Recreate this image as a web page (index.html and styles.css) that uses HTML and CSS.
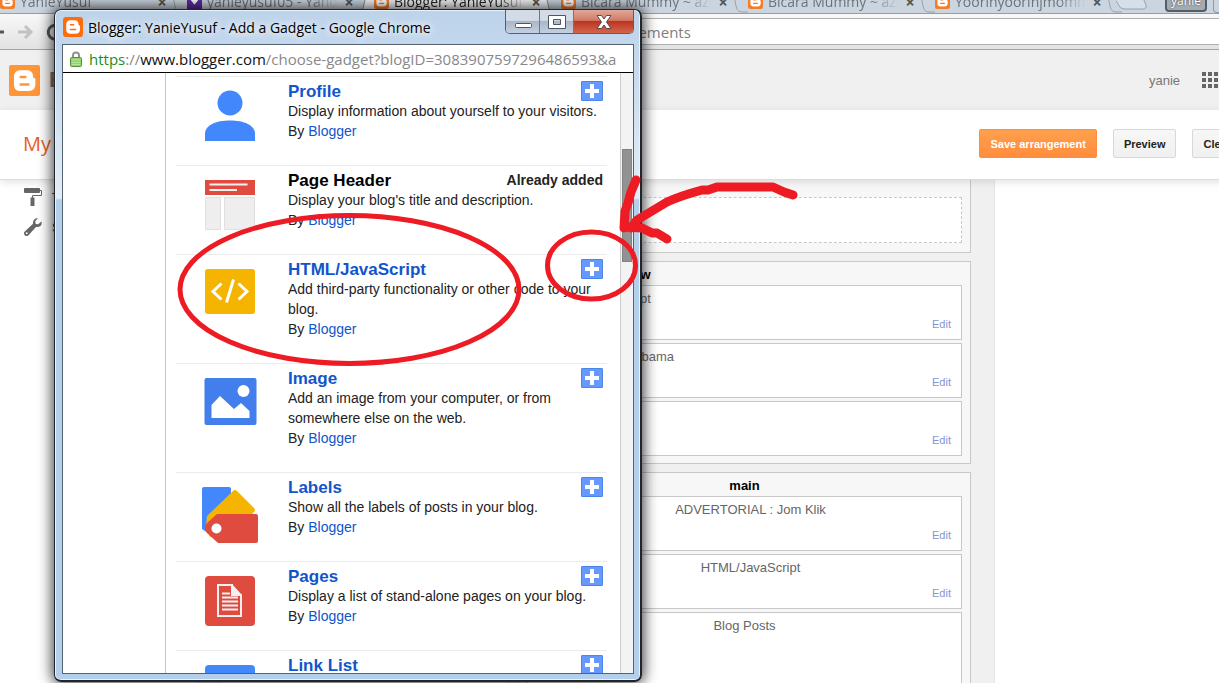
FILE: index.html
```html
<!DOCTYPE html>
<html lang="en">
<head>
<meta charset="utf-8">
<title>Blogger: YanieYusuf - Add a Gadget</title>
<link rel="stylesheet" href="styles.css">
</head>
<body>
<svg class="defs" aria-hidden="true">
  <symbol id="b-logo" viewBox="0 0 30 30">
    <path fill="#fff" fill-rule="evenodd" d="M11 5h6.500c3.500 0 5.800 2.500 5.800 5.400v1.300c.2.900.7 1 1.400 1.100.6.100.8.500.8 1.100v4.800c0 4-2.500 6.500-6.300 6.500H11c-3.700 0-6.200-2.500-6.200-6.200v-7.800C4.800 7.500 7.300 5 11 5zm.3 5.400a1.200 1.200 0 0 0 0 2.400h4.500a1.200 1.200 0 0 0 0-2.400zm0 7.200a1.200 1.200 0 0 0 0 2.400h7.500a1.200 1.200 0 0 0 0-2.400z"/>
  </symbol>
  <symbol id="favicon" viewBox="0 0 30 30">
    <rect width="30" height="30" rx="5" fill="#f57d28"/>
    <use href="#b-logo"/>
  </symbol>
  <symbol id="slant" viewBox="0 0 20 22">
    <path d="M5 0l3 15q1 6 6 6h6" fill="none" stroke="#98a3b0"/>
  </symbol>
</svg>

<div class="browser">
  <nav class="tabs" aria-label="Open tabs">
    <div class="tab"><svg class="fav"><use href="#favicon"/></svg><span class="tab-name">YanieYusuf</span><button class="tab-x" aria-label="Close">×</button><svg class="slant"><use href="#slant"/></svg></div>
    <div class="tab"><svg class="fav" viewBox="0 0 14 14"><rect width="14" height="14" fill="#5c2da0"/><path d="M3 5l4 5 4-5z" fill="#fff"/></svg><span class="tab-name">yanieyusuf05 - Yahoo</span><button class="tab-x" aria-label="Close">×</button><svg class="slant" viewBox="0 0 20 22"><path d="M20 0h-7l-3 13q-1 8-6 9h16z" fill="#f1f3f5"/><path d="M13 0l-3 13q-1 8-6 9" fill="none" stroke="#7f8a96"/></svg></div>
    <div class="tab active"><svg class="fav"><use href="#favicon"/></svg><span class="tab-name">Blogger: YanieYusuf - Layout</span><button class="tab-x" aria-label="Close">×</button><svg class="slant" viewBox="0 0 20 22"><path d="M4 0l3 13q1 8 6 9h7V0z" fill="#cbd5df"/><path d="M4 0l3 13q1 8 6 9" fill="none" stroke="#7f8a96"/></svg></div>
    <div class="tab"><svg class="fav"><use href="#favicon"/></svg><span class="tab-name">Bicara Mummy ~ azie</span><button class="tab-x" aria-label="Close">×</button><svg class="slant"><use href="#slant"/></svg></div>
    <div class="tab"><svg class="fav"><use href="#favicon"/></svg><span class="tab-name">Bicara Mummy ~ azie</span><button class="tab-x" aria-label="Close">×</button><svg class="slant"><use href="#slant"/></svg></div>
    <div class="tab"><svg class="fav"><use href="#favicon"/></svg><span class="tab-name">Yoorinyoorinjmommy</span><button class="tab-x" aria-label="Close">×</button><svg class="slant"><use href="#slant"/></svg></div>
    <svg class="new-tab" viewBox="0 0 32 22"><path d="M-6 0h30l6 14q1 4-3 4H8q-4 0-6-5z" fill="#d5dfe9" stroke="#98a3b0"/></svg>
    <button class="user-chip">yanie</button>
    <span class="win-chip"></span>
  </nav>

  <div class="toolbar">
    <svg class="nav-icons" viewBox="0 0 72 24">
      <path d="M0 12h4" stroke="#555" stroke-width="3"/>
      <path d="M18 12h12M25 6l6 6-6 6" fill="none" stroke="#c2c2c2" stroke-width="3"/>
      <path d="M60 7a7 7 0 1 0 2 7" fill="none" stroke="#555" stroke-width="3"/>
    </svg>
    <input class="omnibox" aria-label="Address" value="https://www.blogger.com/blogger.g?blogID=3083907597296486593#pageelements">
  </div>

  <header class="site-head">
    <svg class="site-logo" viewBox="0 0 30 30"><rect width="30" height="30" rx="2" fill="#ff9537"/><use href="#b-logo"/></svg>
    <span class="site-name">Blogger</span>
    <span class="account">yanie</span>
    <svg class="apps" viewBox="0 0 18 18" fill="#666"><path d="M1 1h4v4H1zM7 1h4v4H7zM13 1h4v4h-4zM1 7h4v4H1zM7 7h4v4H7zM13 7h4v4h-4zM1 13h4v4H1zM7 13h4v4H7zM13 13h4v4h-4z"/></svg>
  </header>

  <div class="actions">
    <h1 class="blog-title">My blog</h1>
    <button class="btn primary">Save arrangement</button>
    <button class="btn">Preview</button>
    <button class="btn">Clear</button>
  </div>

  <main class="work">
    <nav class="side">
      <a class="side-link" href="#"><svg class="side-icon" viewBox="0 0 18 18"><path d="M0 1q0-1 1-1h14q1 0 1 1v3q0 1-1 1H1q-1 0-1-1z" fill="#666"/><path d="M16 2.500h1.500v5H8.500V10" fill="none" stroke="#666"/><path d="M6.500 9.500h4V18h-4z" fill="#666"/></svg>Template</a>
      <a class="side-link" href="#"><svg class="side-icon" viewBox="0 0 18 18"><path d="M17.500 3.500l-3.300 2.700-2.500-.2-.5-2.700L14 .3C11 0 8.600 2 9 5.800L.8 13.500a2.600 2.600 0 0 0 3.700 3.700L12 9c4 .5 6.500-2 5.500-5.500z" fill="#666"/><circle cx="2.700" cy="15.300" r="1" fill="#fff"/></svg>Settings</a>
    </nav>
    <div class="layout">
      <section class="zone"><div class="drop"></div></section>
      <section class="zone">
        <h2 class="zone-name">crosscol-overflow</h2>
        <div class="widget"><span class="widget-name">HTML/JavaScript</span><a class="edit" href="#">Edit</a></div>
        <div class="widget"><span class="widget-name">Kata-kata Barack Obama</span><a class="edit" href="#">Edit</a></div>
        <div class="widget"><span class="widget-name"></span><a class="edit" href="#">Edit</a></div>
      </section>
      <div class="columns">
        <section class="zone"></section>
        <section class="zone">
          <h2 class="zone-name">main</h2>
          <div class="widget"><span class="widget-name">ADVERTORIAL : Jom Klik</span><a class="edit" href="#">Edit</a></div>
          <div class="widget"><span class="widget-name">HTML/JavaScript</span><a class="edit" href="#">Edit</a></div>
          <div class="widget tall"><span class="widget-name">Blog Posts</span></div>
        </section>
      </div>
    </div>
  </main>
</div>

<div class="popup" role="dialog" aria-label="Add a Gadget">
  <div class="frame-head">
    <svg class="popup-fav" viewBox="0 0 30 30"><rect width="30" height="30" rx="5" fill="#ff6a0a"/><use href="#b-logo"/></svg>
    <span class="popup-title">Blogger: YanieYusuf - Add a Gadget - Google Chrome</span>
    <div class="controls">
      <button class="ctl" aria-label="Minimize"><svg viewBox="0 0 20 16"><rect x="2.500" y="9.500" width="16" height="4" rx="1" fill="#fff" stroke="#4c5766"/></svg></button>
      <button class="ctl" aria-label="Maximize"><svg viewBox="0 0 20 16"><path fill-rule="evenodd" d="M1.500 1.500h17v13h-17zM6.500 5.500h7v5h-7z" fill="#fff" stroke="#4c5766"/></svg></button>
      <button class="ctl close" aria-label="Close window"><svg viewBox="0 0 20 16"><path d="M3 1.500h4.500L10 5l2.500-3.500H17L12.500 8l4.500 6.500h-4.500L10 11l-2.500 3.500H3L7.500 8z" fill="#fff" stroke="#5c4a52"/></svg></button>
    </div>
  </div>
  <div class="pane">
    <div class="address">
      <svg class="lock" viewBox="0 0 12 16"><path d="M3 8V4.500a3 3 0 0 1 6 0V8" fill="none" stroke="#909090" stroke-width="2"/><rect x=".5" y="6.500" width="11" height="9" rx="1" fill="#8fd468" stroke="#5b8f3e"/><path d="M2 9h8M2 11.500h8M2 13.500h8" stroke="#b4e698"/></svg>
      <span class="url"><span class="secure">https</span>://<span class="host">www.blogger.com</span>/choose-gadget?blogID=3083907597296486593&amp;a</span>
    </div>
    <div class="scroller">
      <div class="sheet">
        <article class="gadget">
          <svg class="pic" viewBox="0 0 56 60" fill="#4387fd"><circle cx="28" cy="22" r="12.500"/><path d="M3 60V53C3 44 14 39.500 28 39.500S53 44 53 53V60z"/></svg>
          <div class="info">
            <div class="info-head"><a class="name" href="#">Profile</a><button class="add" aria-label="Add Profile"></button></div>
            <p>Display information about yourself to your visitors.</p>
            <p>By <a href="#">Blogger</a></p>
          </div>
        </article>
        <article class="gadget">
          <svg class="pic" viewBox="0 0 56 60"><path d="M3 10h50v15H3z" fill="#e04b40"/><path d="M7.500 14.500h38M7.500 20h27.500" stroke="#f1f1f1" stroke-width="2"/><path d="M3.500 27.500h15v32h-15zM22.500 27.500h30v32h-30z" fill="#eee" stroke="#e0e0e0"/></svg>
          <div class="info">
            <div class="info-head"><span class="name plain">Page Header</span><strong class="added">Already added</strong></div>
            <p>Display your blog's title and description.</p>
            <p>By <a href="#">Blogger</a></p>
          </div>
        </article>
        <article class="gadget">
          <svg class="pic" viewBox="0 0 56 60"><rect x="3" y="10" width="50" height="45" rx="3" fill="#f5b400"/><path d="M19.500 24.500L11 32.500l8.500 8M36.500 24.500l8.500 8-8.500 8M31.500 20.500l-7 23" fill="none" stroke="#fff" stroke-width="3"/></svg>
          <div class="info">
            <div class="info-head"><a class="name" href="#">HTML/JavaScript</a><button class="add" aria-label="Add HTML/JavaScript"></button></div>
            <p>Add third-party functionality or other code to your blog.</p>
            <p>By <a href="#">Blogger</a></p>
          </div>
        </article>
        <article class="gadget">
          <svg class="pic" viewBox="0 0 56 60"><rect x="2.500" y="10" width="52" height="47" rx="2" fill="#427fed"/><path d="M9.500 50V37L18 28l14 13 7-6 8.500 8v7z" fill="#fff"/><circle cx="41.500" cy="23" r="6" fill="#fff"/></svg>
          <div class="info">
            <div class="info-head"><a class="name" href="#">Image</a><button class="add" aria-label="Add Image"></button></div>
            <p>Add an image from your computer, or from somewhere else on the web.</p>
            <p>By <a href="#">Blogger</a></p>
          </div>
        </article>
        <article class="gadget">
          <svg class="pic" viewBox="0 0 56 60"><path d="M2 10h25q2 0 2 2v20L6 56l-6-4V12q0-2 2-2z" fill="#4387fd"/><path d="M5 39L31 14q2-2 4 0l17 17q2 2 0 4L28 60H8L4 50z" fill="#f5b400"/><path d="M15 37h39q2 0 2 2v25q0 2-2 2H16L5 56q-4-4 0-10z" fill="#e04b40"/><circle cx="14.500" cy="51.500" r="5" fill="#fff"/></svg>
          <div class="info">
            <div class="info-head"><a class="name" href="#">Labels</a><button class="add" aria-label="Add Labels"></button></div>
            <p>Show all the labels of posts in your blog.</p>
            <p>By <a href="#">Blogger</a></p>
          </div>
        </article>
        <article class="gadget">
          <svg class="pic" viewBox="0 0 56 60"><rect x="3" y="10" width="50" height="50" rx="4" fill="#e04b40"/><path d="M16 19h14v10h9v21H16z" fill="none" stroke="#f1f1f1" stroke-width="2"/><path d="M30 18l10 11H30z" fill="#f1f1f1"/><path d="M20 27.500h8M20 31.500h16M20 35.500h16M20 39.500h16M20 43.500h16" stroke="#f1f1f1" stroke-width="2"/></svg>
          <div class="info">
            <div class="info-head"><a class="name" href="#">Pages</a><button class="add" aria-label="Add Pages"></button></div>
            <p>Display a list of stand-alone pages on your blog.</p>
            <p>By <a href="#">Blogger</a></p>
          </div>
        </article>
        <article class="gadget">
          <svg class="pic" viewBox="0 0 56 60"><rect x="3" y="10" width="50" height="50" rx="4" fill="#4387fd"/></svg>
          <div class="info">
            <div class="info-head"><a class="name" href="#">Link List</a><button class="add" aria-label="Add Link List"></button></div>
          </div>
        </article>
      </div>
      <div class="track"><div class="thumb"></div></div>
    </div>
  </div>
</div>

<svg class="marks" width="1219" height="683" viewBox="0 0 1219 683" fill="none" stroke="#ed1c24" aria-hidden="true">
  <ellipse cx="349.500" cy="289.500" rx="169.500" ry="74" stroke-width="5"/>
  <ellipse cx="591.500" cy="265.500" rx="44" ry="33.500" stroke-width="5"/>
  <g stroke-width="9" stroke-linecap="round" stroke-linejoin="round">
    <path d="M793 195l-9-3-11-5h-56l-9 3h-6q-22 6-35 12l-30 18-6 8"/>
    <path d="M636 180l-5 12-3 11-3 8-1 17"/>
    <path d="M625 227l17 1 10 5h5l10 6"/>
  </g>
</svg>
</body>
</html>
```
FILE: styles.css
```css
* { box-sizing: border-box; }
body {
  margin: 0;
  height: 100vh;
  overflow: hidden;
  position: relative;
  background: #fff;
  font-family: "Liberation Sans", Arial, sans-serif;
  font-size: 13px;
  color: #222;
}
button, input { font: inherit; margin: 0; }
a { text-decoration: none; }
p, h1, h2 { margin: 0; }
.defs { position: absolute; width: 0; height: 0; }

.browser { height: 100%; display: flex; flex-direction: column; }

/* tab strip */
.tabs {
  flex: none;
  height: 14px;
  display: flex;
  align-items: flex-end;
  overflow: hidden;
  background: #cbd5df;
  border-bottom: 1px solid #949da8;
  font: 14px "Open Sans", "Noto Sans", sans-serif;
  color: #6d7379;
}
.tab { flex: none; width: 187px; height: 23px; display: flex; align-items: center; }
.tab.active { background: #f1f3f5; color: #222; }
.fav { flex: none; width: 15px; height: 15px; margin-right: 5px; }
.tab-name {
  flex: 1;
  min-width: 0;
  white-space: nowrap;
  overflow: hidden;
  margin-right: 6px;
  -webkit-mask-image: linear-gradient(90deg, #000 78%, transparent);
  mask-image: linear-gradient(90deg, #000 78%, transparent);
}
.tab-x { flex: none; width: 10px; padding: 0; border: 0; background: none; font-size: 16px; font-weight: 700; line-height: 20px; color: #555; }
.slant { flex: none; width: 20px; height: 22px; }
.new-tab { flex: none; width: 32px; height: 22px; margin-left: -6px; }
.user-chip {
  flex: none;
  width: 42px;
  height: 22px;
  margin: 0 6px 1px auto;
  padding: 0;
  border: 2px solid #565d66;
  border-radius: 4px;
  background: #a4abb3;
  color: #fff;
  font-size: 12px;
  line-height: 14px;
  text-shadow: 0 0 2px #333;
}
.win-chip { flex: none; width: 6px; height: 22px; border: 1px solid #8d99a6; border-right: 0; border-radius: 0 0 0 4px; }

/* toolbar */
.toolbar {
  flex: none;
  height: 36px;
  display: flex;
  align-items: center;
  background: linear-gradient(#f8f8f8, #e2e2e2);
  border-bottom: 1px solid #a3a3a3;
}
.nav-icons { flex: none; width: 72px; height: 24px; }
.omnibox {
  flex: 1;
  min-width: 0;
  height: 27px;
  margin-right: -4px;
  padding: 0 39px;
  border: 1px solid #b0b0b0;
  background: #fff;
  color: #808080;
  font: 15px "Open Sans", "Noto Sans", sans-serif;
}

/* Blogger header */
.site-head { flex: none; height: 60px; display: flex; align-items: center; padding-left: 9px; overflow: hidden; background: #f0f0f0; color: #777; }
.site-logo { width: 31px; height: 31px; margin-right: 9px; }
.site-name { font-size: 22px; font-weight: 700; color: #777; }
.account { margin-left: auto; margin-right: 21px; }
.apps { width: 18px; height: 18px; flex: none; }

.actions {
  flex: none;
  position: relative;
  height: 70px;
  display: flex;
  align-items: center;
  gap: 16px;
  padding: 0 0 2px 23px;
  margin-right: -23px;
  background: #fff;
  border-bottom: 1px solid #dcdcdc;
  box-shadow: 0 2px 8px rgba(0, 0, 0, .12);
}
.blog-title { margin-right: auto; font: 20px "Open Sans", "Noto Sans", sans-serif; color: #e8601a; }
.btn {
  height: 29px;
  padding: 0 10px;
  border: 1px solid #d8d8d8;
  border-radius: 2px;
  background: linear-gradient(#f7f7f7, #f0f0f0);
  color: #222;
  font-size: 11px;
  font-weight: 700;
}
.btn.primary { border-color: #fb8f3d; background: linear-gradient(#ffa04d, #ff8d3c); color: #fff; }

/* layout editor */
.work { flex: 1; min-height: 0; display: flex; overflow: hidden; }
.side { flex: none; width: 196px; padding: 2px 0 0 24px; }
.side-link { display: flex; align-items: center; gap: 10px; height: 30px; color: #333; }
.side-icon { width: 18px; height: 18px; }
.layout {
  flex: none;
  width: 799px;
  display: flex;
  flex-direction: column;
  gap: 8px;
  padding: 0 23px;
  background: #f0f0f0;
  border-right: 1px solid #e4e4e4;
}
.zone { display: flex; flex-direction: column; gap: 3px; padding: 0 8px 7px; background: #f7f7f7; border: 1px solid #c8c8c8; }
.layout > .zone:first-child { flex: none; border-top: 0; padding: 17px 8px 9px; }
.drop { height: 46px; background: #fff; border: 1px dashed #c8c8c8; }
.zone-name { margin-bottom: -3px; padding-top: 3px; font-size: 13px; line-height: 20px; text-align: center; color: #000; }
.widget {
  height: 55px;
  display: flex;
  flex-direction: column;
  justify-content: space-between;
  padding: 5px 10px 7px;
  background: #fff;
  border: 1px solid #c8c8c8;
  line-height: 16px;
}
.widget-name { min-height: 16px; padding-left: 12px; text-align: center; color: #666; }
.edit { align-self: flex-end; font-size: 11px; line-height: 16px; color: #7f96cf; }
.widget.tall { height: 120px; }
.tall .widget-name { padding-left: 0; }
.columns { display: grid; grid-template-columns: 290px 1fr; gap: 9px; }

/* pop-up window */
.popup {
  position: absolute;
  left: 54px;
  top: 9px;
  bottom: 1px;
  width: 588px;
  display: flex;
  flex-direction: column;
  padding: 0 6px 6px 7px;
  border: 2px solid #20262c;
  border-width: 1px 2px 2px 1px;
  border-radius: 7px;
  background: linear-gradient(#bdd3ea 0, #c6daef 60px, #e4edf7 188px, #b2cfec 190px);
  box-shadow: inset 0 0 0 1px #e9f2fa, 0 0 14px 2px rgba(0, 0, 0, .75);
}
.frame-head { flex: none; height: 34px; display: flex; align-items: center; padding-left: 1px; }
.popup-fav { flex: none; width: 20px; height: 20px; margin-right: 5px; }
.popup-title {
  flex: 1;
  font: 14px "Open Sans", "Noto Sans", sans-serif;
  white-space: nowrap;
  color: #000;
  text-shadow: 0 0 8px #fff, 0 0 8px #fff;
}
.controls { flex: none; align-self: flex-start; display: flex; border: 1px solid #55606e; border-top: 0; border-radius: 0 0 5px 5px; overflow: hidden; }
.ctl {
  width: 34px;
  height: 23px;
  display: flex;
  align-items: center;
  justify-content: center;
  padding: 0;
  border: 0;
  border-right: 1px solid #6c7889;
  background: linear-gradient(#d2dbe6 45%, #aab7c8 50%, #c3d0df);
}
.ctl svg { width: 20px; height: 16px; }
.ctl.close { width: 59px; border-right: 0; background: linear-gradient(#e0a89a, #d27a67 45%, #bb3622 50%, #d5654a); }
.pane { flex: 1; min-height: 0; display: flex; flex-direction: column; border: 1px solid #56636f; background: #fff; }
.address { flex: none; height: 28px; display: flex; align-items: center; padding: 0 4px 0 7px; border-bottom: 1px solid #000; }
.lock { flex: none; width: 12px; height: 16px; margin-right: 7px; }
.url { flex: 1; min-width: 0; overflow: hidden; white-space: nowrap; font: 15px "Open Sans", "Noto Sans", sans-serif; color: #888; }
.secure { color: #1a8f1a; }
.host { color: #111; }
.scroller { flex: 1; min-height: 0; display: flex; overflow: hidden; }
.sheet { flex: 1; min-width: 0; margin-left: 102px; padding: 3px 13px 0 10px; border-left: 1px solid #c4c4c4; overflow: hidden; }
.track { flex: none; width: 13px; padding: 76px 1px 0; background: #f3f3f3; border-left: 1px solid #ccc; }
.thumb { height: 113px; background: #929292; border: 1px solid #828282; }

.gadget { display: flex; align-items: flex-start; padding: 4px 0 24px 26px; border-top: 1px solid #ebebeb; font-size: 14px; line-height: 20px; }
.pic { flex: none; width: 56px; height: 60px; margin-right: 30px; overflow: visible; }
.info { flex: 1; min-width: 0; }
.info p a { color: #1155cc; }
.info-head { display: flex; justify-content: space-between; height: 20px; padding-right: 4px; }
.name { font-size: 17px; font-weight: 700; line-height: 22px; color: #1155cc; }
.name.plain { color: #000; }
.added { color: #222; }
.add {
  width: 22px;
  height: 20px;
  padding: 0;
  border: 1px solid #4a86e8;
  border-radius: 1px;
  background:
    linear-gradient(#fff, #fff) center / 14px 4px no-repeat,
    linear-gradient(#fff, #fff) center / 4px 14px no-repeat,
    #6699ff;
}

.marks { position: absolute; left: 0; top: 0; pointer-events: none; }
```
